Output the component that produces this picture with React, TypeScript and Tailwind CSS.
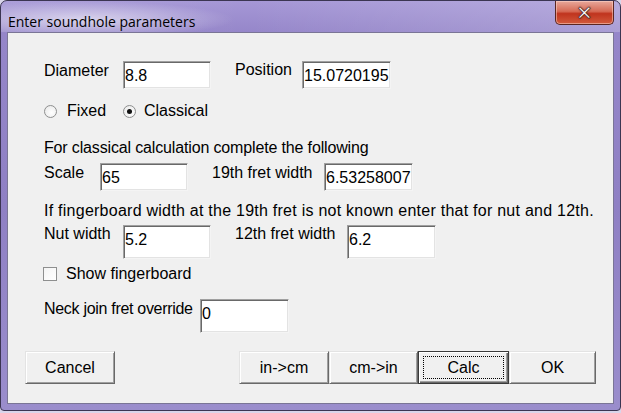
import React from "react"

const font = "font-['Liberation_Sans',Arial,sans-serif]"

function Field({ value, w, h = "h-[28px]" }: { value: string; w: string; h?: string }) {
  return (
    <div
      className={`${w} ${h} shrink-0 bg-white border border-t-[#a0a0a0] border-l-[#a0a0a0] border-b-[#f4f4f4] border-r-[#f4f4f4] shadow-[inset_1px_1px_0_#696969,inset_-1px_-1px_0_#e3e3e3] pl-[1px] pt-[5px] text-[16px] leading-[18px] text-black`}
    >
      {value}
    </div>
  )
}

function Btn({ label, w, isDefault = false }: { label: string; w: string; isDefault?: boolean }) {
  return (
    <div
      className={`${w} h-[33px] shrink-0 flex items-center justify-center bg-[#f0f0f0] text-[16px] text-black ${
        isDefault
          ? "border border-[#3a3a3a] shadow-[inset_1px_1px_0_#ffffff,inset_-1px_-1px_0_#696969,inset_-2px_-2px_0_#a0a0a0]"
          : "border border-t-[#e3e3e3] border-l-[#e3e3e3] border-b-[#696969] border-r-[#696969] shadow-[inset_1px_1px_0_#ffffff,inset_-1px_-1px_0_#a0a0a0]"
      }`}
    >
      {isDefault ? (
        <div className="w-[calc(100%-8px)] h-[calc(100%-8px)] border border-dotted border-black flex items-center justify-center">
          {label}
        </div>
      ) : (
        label
      )}
    </div>
  )
}

function Radio({ checked }: { checked?: boolean }) {
  return (
    <div className="w-[13px] h-[13px] shrink-0 rounded-full border border-[#8e8f8f] bg-[radial-gradient(circle_at_60%_60%,#ffffff,#e6e6e6)] flex items-center justify-center">
      {checked && <div className="w-[5px] h-[5px] rounded-full bg-[#111]" />}
    </div>
  )
}

export default function App() {
  return (
    <div className={`w-[621px] h-[413px] bg-[#d9d5ea] ${font}`}>
      <div className="w-[621px] h-[411px] rounded-t-[7px] rounded-b-[4px] border border-[#3b3552] bg-[linear-gradient(180deg,#a597d6_0%,#9586c9_8%,#8f80c4_50%,#9a8dcc_100%)] flex flex-col overflow-hidden">
        {/* Title bar */}
        <div className="h-[31px] flex items-start justify-between bg-[linear-gradient(90deg,rgba(255,255,255,0.08),rgba(255,255,255,0)_40%,rgba(255,255,255,0.2))]">
          <div className="pl-[7px] pr-[40px] pt-[9px] h-[31px] bg-[radial-gradient(ellipse_at_35%_60%,rgba(255,255,255,0.6),rgba(255,255,255,0)_70%)]">
            <span className="font-['Open_Sans',sans-serif] text-[14px] leading-[18px] text-black">
              Enter soundhole parameters
            </span>
          </div>
          <div className="mr-[6px] w-[59px] h-[24px] rounded-b-[5px] border border-t-0 border-[#5a2621] bg-[linear-gradient(180deg,#e8a89b_0%,#d66a55_45%,#c0341e_55%,#d25a3c_100%)] shadow-[inset_0_0_0_1px_rgba(255,220,210,0.5)] flex items-center justify-center">
            <span className="font-['DejaVu_Sans',sans-serif] font-bold text-[20px] leading-none text-white [-webkit-text-stroke:0.6px_#4a1a14] [text-shadow:0_0_2px_#4a1a14]">
              ✕
            </span>
          </div>
        </div>

        {/* Client area */}
        <div className="flex-1 mx-[6px] mb-[6px] border border-[#7a7596] bg-[#f0f0f0] flex flex-col text-[16px] leading-[18px] text-black">
          <div className="mt-[28px] pl-[36px] flex items-start">
            <div className="w-[79px] pt-[1px]">Diameter</div>
            <Field value="8.8" w="w-[88px]" />
            <div className="ml-[24px] w-[67px]">Position</div>
            <Field value="15.0720195" w="w-[89px]" />
          </div>

          <div className="mt-[14px] pl-[36px] flex items-center h-[16px]">
            <div className="w-[79px] flex items-center gap-[10px]">
              <Radio />
              <span>Fixed</span>
            </div>
            <div className="flex items-center gap-[8px]">
              <Radio checked />
              <span>Classical</span>
            </div>
          </div>

          <div className="mt-[20px] pl-[36px] tracking-[-0.15px]">For classical calculation complete the following</div>

          <div className="mt-[6px] pl-[36px] flex items-start">
            <div className="w-[56px] pt-[1px]">Scale</div>
            <Field value="65" w="w-[88px]" />
            <div className="ml-[24px] w-[112px] pt-[1px]">19th fret width</div>
            <Field value="6.53258007" w="w-[89px]" />
          </div>

          <div className="mt-[11px] pl-[36px] tracking-[0.25px]">
            If fingerboard width at the 19th fret is not known enter that for nut and 12th.
          </div>

          <div className="mt-[5px] pl-[36px] flex items-start">
            <div className="w-[79px]">Nut width</div>
            <Field value="5.2" w="w-[88px]" h="h-[34px]" />
            <div className="ml-[24px] w-[112px]">12th fret width</div>
            <Field value="6.2" w="w-[89px]" h="h-[34px]" />
          </div>

          <div className="mt-[6px] pl-[35px] flex items-center gap-[9px]">
            <div className="w-[14px] h-[14px] border border-[#8e8f8f] bg-[linear-gradient(135deg,#f4f4f4,#ffffff)]" />
            <span>Show fingerboard</span>
          </div>

          <div className="mt-[16px] pl-[36px] flex items-start">
            <div className="w-[156px] pt-[1px] tracking-[-0.3px]">Neck join fret override</div>
            <Field value="0" w="w-[89px]" h="h-[34px]" />
          </div>

          <div className="mt-[18px] pl-[17px] flex">
            <Btn label="Cancel" w="w-[90px]" />
            <div className="ml-[124px] flex">
              <Btn label="in->cm" w="w-[90px]" />
              <Btn label="cm->in" w="w-[89px]" />
              <Btn label="Calc" w="w-[91px]" isDefault />
              <Btn label="OK" w="w-[87px]" />
            </div>
          </div>
        </div>
      </div>
    </div>
  )
}
